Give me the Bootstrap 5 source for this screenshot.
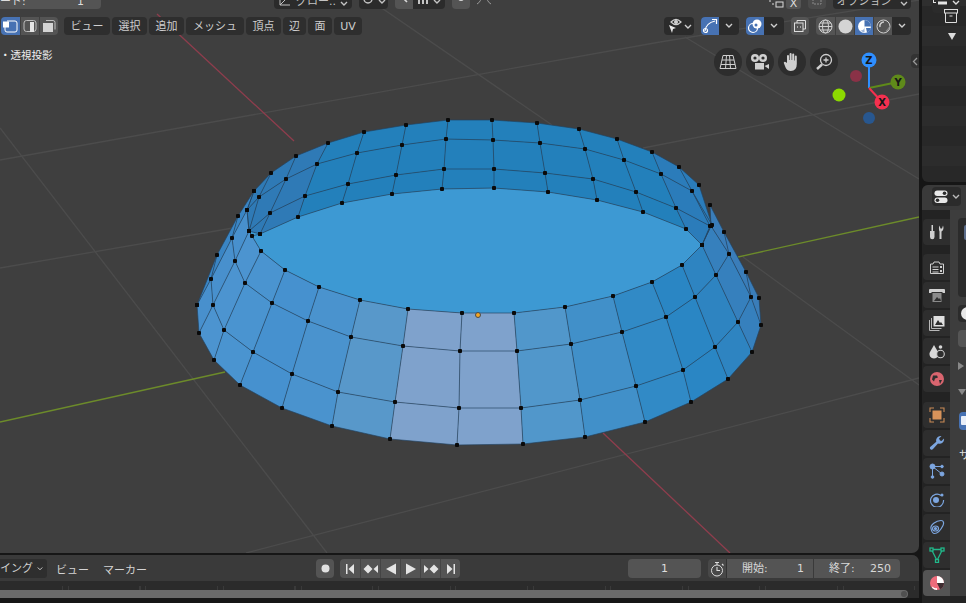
<!DOCTYPE html>
<html lang="ja">
<head>
  <meta charset="UTF-8">
  <title>Blender 編集モード</title>
  <link href="https://cdn.jsdelivr.net/npm/bootstrap@5.3.3/dist/css/bootstrap.min.css" rel="stylesheet">
  <script src="https://cdn.jsdelivr.net/npm/bootstrap@5.3.3/dist/js/bootstrap.bundle.min.js"></script>
  <style>
    html, body { height: 603px; overflow: hidden; }
    body {
      background: #161616;
      color: #d0d0d0;
      font-family: "DejaVu Sans", "Noto Sans CJK JP", sans-serif;
      font-size: 11px;
      line-height: 1;
    }
    svg { display: block; }

    /* エリア */
    .left-col { width: 919px; height: 603px; }
    .right-col { width: 44px; margin-left: 3px; height: 603px; }
    .view3d { height: 553px; background: #3f3f3f; border-radius: 0 0 7px 0; overflow: hidden; }
    .scene { position: absolute; left: 0; top: 0; }
    .timeline { margin-top: 2px; height: 43px; border-radius: 0 7px 0 0; background: #2b2b2b; overflow: hidden; }

    /* ヘッダー上段(見切れ) */
    .top-row { height: 9px; }
    .top-row > * { height: 20px; margin-top: -11px; flex: none; }
    .mode-field { width: 101px; background: #545454; border-radius: 0 0 4px 0; padding: 0 17px 2px 0; color: #ddd; }
    .dark-btn { background: #2b2b2b; border-radius: 4px; color: #c4c4c4; }
    .grey-btn { background: #545454; color: #d8d8d8; }
    .dim-btn { background: #4b4b4b; color: #8c8c8c; border-radius: 4px; }
    .orient { width: 78px; margin-left: 173px; padding-bottom: 2px; }
    .pivot { width: 29px; margin-left: 7px; }
    .snap { width: 50px; margin-left: 7px; }
    .snap-a { width: 18px; height: 100%; border-radius: 4px 0 0 4px; }
    .snap-b { width: 32px; height: 100%; border-radius: 0 4px 4px 0; }
    .prop { width: 18px; margin-left: 7px; border-radius: 4px; }
    .falloff { width: 22px; margin-left: 3px; color: #9a9a9a; }
    .xform { width: 16px; margin-left: 273px; color: #ddd; }
    .axis-x { width: 15px; margin-left: 2px; border-radius: 0 0 3px 3px; color: #ddd; padding-top: 9px; }
    .mirror { width: 18px; margin-left: 7px; }
    .options { width: 78px; margin-left: 7px; padding-bottom: 2px; }

    /* ヘッダー下段 */
    .tool-row { height: 18px; margin-top: 8px; padding-left: 1px; }
    .seg { width: 19px; height: 18px; margin-right: 0; background: #545454; color: #d6d6d6; }
    .seg + .seg { border-left: 1px solid #3f3f3f; }
    .seg:first-child { border-radius: 4px 0 0 4px; }
    .seg:last-child { border-radius: 0 4px 4px 0; }
    .seg-on { background: #4772b3; color: #fff; }
    .menus { margin-left: 6px; gap: 2px; }
    .menu-btn { height: 18px; background: #2e2e2e; border-radius: 4px; color: #cfcfcf; }
    .w46 { width: 46px; } .w35 { width: 35px; } .w58 { width: 58px; }
    .w23 { width: 23px; } .w24 { width: 24px; } .w28 { width: 28px; }
    .right-tools { margin-left: auto; margin-right: 8px; gap: 7px; }
    .tool-pair { height: 18px; border-radius: 4px; background: #2b2b2b; overflow: hidden; color: #cfcfcf; }
    .pair-on { width: 18px; height: 18px; background: #4772b3; color: #fff; }
    .pair-rest { width: 20px; height: 18px; }
    .eye-btn { width: 30px; height: 18px; }
    .xray { width: 18px; height: 18px; background: #545454; border-radius: 4px; color: #ddd; }
    .shade-rest { width: 19px; height: 18px; background: #2b2b2b; border-radius: 0 4px 4px 0; color: #cfcfcf; }
    .view-label { margin-top: 15px; font-size: 10.5px; color: #f0f0f0; }
    .nav-round { position: absolute; left: 714px; top: 48px; gap: 2px; }
    .round-btn { width: 28px; height: 28px; margin-right: 2px; border-radius: 50%; background: #2d2d2d; color: #cfcfcf; }
    .side-tab { position: absolute; right: 0; top: 54px; width: 8px; height: 14px; background: #333; border-radius: 4px 0 0 4px; color: #999; }

    /* タイムライン */
    .tl-head { height: 26px; background: #3a3a3a; padding-top: 4px; }
    .tl-mode { width: 47px; height: 19px; background: #2e2e2e; border-radius: 0 3px 3px 0; padding-right: 4px; margin-right: 9px; overflow: hidden; }
    .tl-menu { color: #d4d4d4; }
    .tl-marker { margin-left: 14px; }
    .rec { width: 18px; height: 19px; margin-left: 169px; background: #545454; border-radius: 4px; color: #e0e0e0; }
    .playback { margin-left: 6px; }
    .play-btn { width: 20px; height: 19px; background: #545454; color: #e4e4e4; }
    .play-btn + .play-btn { border-left: 1px solid #444; }
    .play-btn:first-child { border-radius: 4px 0 0 4px; }
    .play-btn:last-child { border-radius: 0 4px 4px 0; }
    .frame-now { width: 73px; height: 19px; margin-left: 168px; background: #545454; border-radius: 4px; color: #ddd; }
    .timer { width: 19px; height: 19px; margin-left: 7px; background: #484848; border-radius: 4px 0 0 4px; color: #ddd; border-right: 1px solid #333; }
    .range { height: 19px; background: #545454; color: #d8d8d8; padding: 0 9px 0 15px; }
    .range-a { width: 87px; border-right: 1px solid #3a3a3a; }
    .range-b { width: 86px; border-radius: 0 4px 4px 0; }
    .tl-ticks {
      height: 9px;
      background: repeating-linear-gradient(90deg, transparent 0 62px, #3a3a3a 62px 63px, transparent 63px 68px, #3a3a3a 68px 69px, transparent 69px 77.5px) bottom / 100% 4px no-repeat;
    }
    .tl-scroll { width: 908px; height: 8px; background: #6a6a6a; border-radius: 0 4px 4px 0; padding-right: 1px; }
    .tl-knob { width: 6px; height: 6px; border-radius: 50%; background: #505050; }

    /* アウトライナー */
    .outliner { height: 182px; background: #282828; border-radius: 0 0 0 6px; overflow: hidden; }
    .ol-head { height: 13px; background: #2f2f2f; }
    .ol-drop { width: 28px; height: 20px; margin: -7px 0 0 10px; background: #2b2b2b; border-radius: 4px; color: #ddd; }
    .ol-row { height: 20px; padding-left: 22px; color: #ddd; }
    .ol-row:nth-child(odd) { background: #2c2c2c; }

    /* プロパティ */
    .props { height: 418px; margin-top: 3px; background: #232323; border-radius: 6px 0 0 0; overflow: hidden; }
    .pr-head { height: 25px; background: #3a3a3a; padding-top: 2px; }
    .pr-drop { width: 29px; height: 19px; margin-left: 10px; background: #2b2b2b; border-radius: 4px; color: #ddd; }
    .pr-tabs { width: 28px; padding: 9px 0 0 1px; gap: 2px; }
    .pr-tab { height: 26px; flex: none; background: #2e2e2e; border-radius: 4px 0 0 4px; color: #d0d0d0; }
    .pr-tab-on { background: #545454; }
    .tab-gap-a { margin-top: 7px; }
    .tab-gap-b { margin-top: 8px; }
    .pr-body { width: 16px; background: #3d3d3d; padding: 8px 0 0 8px; overflow: hidden; }
    .pr-list { height: 79px; background: #2b2b2b; border-radius: 4px 0 0 4px; padding: 7px 0 0 6px; }
    .pr-list-bar { width: 3px; height: 15px; background: #5b6c8a; border-radius: 2px 0 0 2px; }
    .pr-icon { height: 17px; margin-top: 8px; background: #2b2b2b; border-radius: 4px 0 0 4px; padding: 2px 0 0 3px; }
    .pr-dot { width: 13px; height: 13px; border-radius: 50%; background: #e8e8e8; }
    .pr-field { height: 17px; margin-top: 8px; background: #555; border-radius: 4px 0 0 4px; }
    .tri-r { margin-top: 15px; width: 0; height: 0; border-left: 6px solid #888; border-top: 4px solid transparent; border-bottom: 4px solid transparent; }
    .tri-d { margin-top: 19px; width: 0; height: 0; border-top: 6px solid #888; border-left: 4px solid transparent; border-right: 4px solid transparent; }
    .pr-blue { width: 14px; height: 18px; margin: 17px 0 0 1px; background: #4772b3; border-radius: 4px 0 0 4px; padding: 4px 0 0 2px; }
    .pr-blue-in { width: 12px; height: 9px; background: #e8eef8; border-radius: 1px; }
    .pr-sa { margin-top: 20px; margin-left: 1px; white-space: nowrap; color: #ddd; }
  </style>
</head>
<body>
<div class="d-flex">

  <div class="left-col d-flex flex-column">
    <!-- 3Dビューポート -->
    <div class="view3d position-relative">
      <svg id="scene" class="scene" width="919" height="553"></svg>

      <div class="top-row d-flex position-relative">
        <div class="mode-field d-flex align-items-end justify-content-between"><span>ード:</span><span>1</span></div>
        <div class="dark-btn orient d-flex align-items-end justify-content-center gap-1">
          <svg width="14" height="12" viewBox="0 0 14 12" fill="none" stroke="currentColor"><path d="M2 1v9h10M2 10l7-7"/></svg>
          <span>グロー..</span>
          <svg width="8" height="6" viewBox="0 0 8 6" fill="none" stroke="currentColor" stroke-width="1.4"><path d="M1 1l3 3 3-3"/></svg>
        </div>
        <div class="dark-btn pivot d-flex align-items-end justify-content-center gap-1 pb-1">
          <svg width="12" height="10" viewBox="0 0 12 10" fill="none" stroke="currentColor" stroke-width="1.3"><circle cx="6" cy="4" r="4"/></svg>
          <svg width="8" height="6" viewBox="0 0 8 6" fill="none" stroke="currentColor" stroke-width="1.4"><path d="M1 1l3 3 3-3"/></svg>
        </div>
        <div class="snap d-flex">
          <div class="grey-btn snap-a d-flex align-items-end justify-content-center pb-1">
            <svg width="12" height="10" viewBox="0 0 12 10" fill="none" stroke="currentColor" stroke-width="1.6"><path d="M2 0l7 7"/></svg>
          </div>
          <div class="dark-btn snap-b d-flex align-items-end justify-content-center gap-1 pb-1">
            <svg width="12" height="10" viewBox="0 0 12 10" fill="currentColor"><path d="M1 3h2v6H1zM5 3h2v6H5zM9 0h2v9H9z"/></svg>
            <svg width="8" height="6" viewBox="0 0 8 6" fill="none" stroke="currentColor" stroke-width="1.4"><path d="M1 1l3 3 3-3"/></svg>
          </div>
        </div>
        <div class="grey-btn prop d-flex align-items-end justify-content-center pb-1">
          <svg width="10" height="10" viewBox="0 0 10 10" fill="currentColor"><circle cx="5" cy="3" r="3"/></svg>
        </div>
        <div class="falloff d-flex align-items-end justify-content-center pb-1">
          <svg width="16" height="10" viewBox="0 0 16 10" fill="none" stroke="currentColor"><path d="M6 0Q5 7 1 9M10 0q1 7 5 9"/></svg>
        </div>
        <div class="xform d-flex align-items-end">
          <svg width="16" height="10" viewBox="0 0 16 10" fill="none" stroke="currentColor"><path d="M1 2h2M4 5h2"/><rect x="8" y="3" width="7" height="5"/></svg>
        </div>
        <div class="grey-btn axis-x d-flex align-items-end justify-content-center">X</div>
        <div class="dim-btn mirror d-flex align-items-end justify-content-center pb-1">
          <svg width="10" height="9" viewBox="0 0 10 9" fill="none" stroke="currentColor" stroke-dasharray="2 1"><rect x="1" y="0" width="8" height="8"/></svg>
        </div>
        <div class="dark-btn options d-flex align-items-end justify-content-center gap-2">
          <span>オプション</span>
          <svg width="8" height="6" viewBox="0 0 8 6" fill="none" stroke="currentColor" stroke-width="1.4"><path d="M1 1l3 3 3-3"/></svg>
        </div>
      </div>

      <div class="tool-row d-flex position-relative">
        <div class="d-flex">
          <div class="seg seg-on d-flex align-items-center justify-content-center">
            <svg width="16" height="14" viewBox="0 0 16 14" fill="none" stroke="currentColor"><path d="M4 2h8a2 2 0 0 1 2 2v7a2 2 0 0 1-2 2H4a2 2 0 0 1-2-2V8"/><rect x="0.5" y="3" width="5" height="5" fill="currentColor"/></svg>
          </div>
          <div class="seg d-flex align-items-center justify-content-center">
            <svg width="14" height="14" viewBox="0 0 14 14" fill="none" stroke="#bdbdbd"><rect x="1" y="1.500" width="12" height="11" rx="2.500"/><rect x="7" y="3" width="4" height="10" fill="#e4e4e4" stroke="none"/></svg>
          </div>
          <div class="seg d-flex align-items-center justify-content-center">
            <svg width="14" height="14" viewBox="0 0 14 14" fill="none" stroke="#bdbdbd"><path d="M4 1.500h7a2 2 0 0 1 2 2v7"/><rect x="1" y="4" width="10" height="9" fill="#d4d4d4" stroke="none"/></svg>
          </div>
        </div>
        <div class="menus d-flex">
          <div class="menu-btn w46 d-flex align-items-center justify-content-center">ビュー</div>
          <div class="menu-btn w35 d-flex align-items-center justify-content-center">選択</div>
          <div class="menu-btn w35 d-flex align-items-center justify-content-center">追加</div>
          <div class="menu-btn w58 d-flex align-items-center justify-content-center">メッシュ</div>
          <div class="menu-btn w35 d-flex align-items-center justify-content-center">頂点</div>
          <div class="menu-btn w23 d-flex align-items-center justify-content-center">辺</div>
          <div class="menu-btn w24 d-flex align-items-center justify-content-center">面</div>
          <div class="menu-btn w28 d-flex align-items-center justify-content-center">UV</div>
        </div>

        <div class="right-tools d-flex">
          <div class="tool-pair eye-btn d-flex align-items-center justify-content-center">
            <svg width="28" height="16" viewBox="0 0 28 16" fill="none" stroke="currentColor">
              <path d="M6 4q5-5 10 0q-5 5-10 0z" stroke-width="1.200"/><circle cx="11" cy="4" r="1.500" fill="currentColor"/>
              <path d="M4 7l7 3-3 1-1 4z" fill="#e8e8e8" stroke="none"/>
              <path d="M20 7l3 3 3-3" stroke-width="1.400"/>
            </svg>
          </div>
          <div class="tool-pair d-flex">
            <div class="pair-on d-flex align-items-center justify-content-center">
              <svg width="16" height="16" viewBox="0 0 16 16" fill="none" stroke="currentColor" stroke-width="1.200"><path d="M3 13q1-8 10-10"/><circle cx="3.500" cy="12.500" r="2"/><path d="M10 1.500h4.500V6"/></svg>
            </div>
            <div class="pair-rest d-flex align-items-center justify-content-center">
              <svg width="8" height="6" viewBox="0 0 8 6" fill="none" stroke="currentColor" stroke-width="1.400"><path d="M1 1l3 3 3-3"/></svg>
            </div>
          </div>
          <div class="tool-pair d-flex">
            <div class="pair-on d-flex align-items-center justify-content-center">
              <svg width="16" height="16" viewBox="0 0 16 16"><circle cx="6" cy="10" r="4.500" fill="none" stroke="#fff" stroke-width="1.200"/><circle cx="10" cy="6" r="4.500" fill="#fff"/><circle cx="9" cy="7" r="1.500" fill="#4772b3"/></svg>
            </div>
            <div class="pair-rest d-flex align-items-center justify-content-center">
              <svg width="8" height="6" viewBox="0 0 8 6" fill="none" stroke="currentColor" stroke-width="1.400"><path d="M1 1l3 3 3-3"/></svg>
            </div>
          </div>
          <div class="xray d-flex align-items-center justify-content-center">
            <svg width="14" height="14" viewBox="0 0 14 14" fill="none" stroke="currentColor"><path d="M4 4V1.500h8.500V10H10"/><rect x="1.500" y="4" width="8.500" height="8.500"/><path d="M4 8h.8M7 8h.8" stroke-width="1.400"/></svg>
          </div>
          <div class="d-flex">
            <div class="seg d-flex align-items-center justify-content-center">
              <svg width="15" height="15" viewBox="0 0 15 15" fill="none" stroke="#d0d0d0"><circle cx="7.500" cy="7.500" r="6.500"/><ellipse cx="7.500" cy="7.500" rx="3" ry="6.500"/><path d="M1 7.500h13M2 4h11M2 11h11"/></svg>
            </div>
            <div class="seg d-flex align-items-center justify-content-center">
              <svg width="15" height="15" viewBox="0 0 15 15"><circle cx="7.500" cy="7.500" r="7" fill="#d4d4d4"/></svg>
            </div>
            <div class="seg seg-on d-flex align-items-center justify-content-center">
              <svg width="15" height="15" viewBox="0 0 15 15"><circle cx="7.500" cy="7.500" r="6.500" fill="#fff"/><path d="M7.500 1a6.500 6.500 0 0 1 6.500 6.500H7.500z" fill="#4772b3"/><path d="M7.500 7.500a4 4 0 0 1-4 4 6.500 6.500 0 0 0 4 2z" fill="#9fb6d8"/><path d="M9 9h5a6.500 6.500 0 0 1-4 4.500z" fill="#4772b3"/></svg>
            </div>
            <div class="seg d-flex align-items-center justify-content-center">
              <svg width="15" height="15" viewBox="0 0 15 15" fill="none" stroke="#cfcfcf"><circle cx="7.500" cy="7.500" r="6.500"/><path d="M4 8a4 4 0 0 1 4-5" stroke-width="1.500"/><path d="M10 12.500a6 6 0 0 0 3-4" stroke="#888" stroke-width="1.500"/></svg>
            </div>
            <div class="shade-rest d-flex align-items-center justify-content-center">
              <svg width="8" height="6" viewBox="0 0 8 6" fill="none" stroke="currentColor" stroke-width="1.400"><path d="M1 1l3 3 3-3"/></svg>
            </div>
          </div>
        </div>
      </div>

      <div class="view-label position-relative">・透視投影</div>

      <div class="nav-round d-flex">
        <div class="round-btn d-flex align-items-center justify-content-center">
          <svg width="18" height="16" viewBox="0 0 18 16" fill="none" stroke="currentColor"><path d="M4 1.500h10l3 13H1zM3 6h12M2 10.500h14M7.500 1.500L6.500 14.500M10.500 1.500l1 13"/></svg>
        </div>
        <div class="round-btn d-flex align-items-center justify-content-center">
          <svg width="20" height="18" viewBox="0 0 20 18" fill="currentColor"><circle cx="5" cy="5" r="4"/><circle cx="13" cy="5" r="4"/><circle cx="5" cy="5" r="1.600" fill="#2d2d2d"/><circle cx="13" cy="5" r="1.600" fill="#2d2d2d"/><rect x="5" y="10" width="9" height="6.500"/><path d="M14.500 13l4.500-2v5z"/></svg>
        </div>
        <div class="round-btn d-flex align-items-center justify-content-center">
          <svg width="18" height="20" viewBox="0 0 18 20" fill="currentColor"><path d="M4 11V4a1 1 0 0 1 2 0v4h.6V2a1 1 0 0 1 2 0v6h.6V2.500a1 1 0 0 1 2 0V8.500h.6V4.500a1 1 0 0 1 2 0V12q0 7-6 7q-3.500 0-5-3L1 11.500c-.8-1.500 1-2.500 2-1.200z"/></svg>
        </div>
        <div class="round-btn d-flex align-items-center justify-content-center">
          <svg width="18" height="18" viewBox="0 0 18 18" fill="none" stroke="currentColor" stroke-width="1.300"><circle cx="11" cy="7" r="5.500"/><path d="M7 11.500L2 16" stroke-width="2.400"/><path d="M8.500 7h5M11 4.500v5"/></svg>
        </div>
      </div>

      <div class="side-tab d-flex align-items-center justify-content-center">
        <svg width="6" height="9" viewBox="0 0 6 9" fill="none" stroke="currentColor" stroke-width="1.300"><path d="M5 1L1.500 4.500 5 8"/></svg>
      </div>
    </div>

    <!-- タイムライン -->
    <div class="timeline">
      <div class="tl-head d-flex">
        <div class="tl-mode d-flex align-items-center justify-content-end gap-1">
          <span class="text-nowrap">イング</span>
          <svg class="flex-none" width="8" height="6" viewBox="0 0 8 6" fill="none" stroke="currentColor" stroke-width="1.300"><path d="M1 1l3 3 3-3"/></svg>
        </div>
        <div class="tl-menu d-flex align-items-center">ビュー</div>
        <div class="tl-menu tl-marker d-flex align-items-center">マーカー</div>
        <div class="rec d-flex align-items-center justify-content-center">
          <svg width="9" height="9" viewBox="0 0 9 9"><circle cx="4.500" cy="4.500" r="4" fill="currentColor"/></svg>
        </div>
        <div class="playback d-flex">
          <div class="play-btn d-flex align-items-center justify-content-center">
            <svg width="12" height="12" viewBox="0 0 12 12" fill="currentColor"><path d="M2 1h1.500v10H2zM10 1v10L4.500 6z"/></svg>
          </div>
          <div class="play-btn d-flex align-items-center justify-content-center">
            <svg width="16" height="12" viewBox="0 0 16 12" fill="currentColor"><path d="M5 1.500L9.500 6 5 10.500.5 6zM15 2v8l-4.500-4z"/></svg>
          </div>
          <div class="play-btn d-flex align-items-center justify-content-center">
            <svg width="12" height="12" viewBox="0 0 12 12" fill="currentColor"><path d="M11 .5v11L1 6z"/></svg>
          </div>
          <div class="play-btn d-flex align-items-center justify-content-center">
            <svg width="12" height="12" viewBox="0 0 12 12" fill="currentColor"><path d="M1 .5v11L11 6z"/></svg>
          </div>
          <div class="play-btn d-flex align-items-center justify-content-center">
            <svg width="16" height="12" viewBox="0 0 16 12" fill="currentColor"><path d="M11 1.500L15.500 6 11 10.500 6.500 6zM1 2v8l4.500-4z"/></svg>
          </div>
          <div class="play-btn d-flex align-items-center justify-content-center">
            <svg width="12" height="12" viewBox="0 0 12 12" fill="currentColor"><path d="M10 1H8.500v10H10zM2 1v10l5.500-5z"/></svg>
          </div>
        </div>
        <div class="frame-now d-flex align-items-center justify-content-center">1</div>
        <div class="timer d-flex align-items-center justify-content-center">
          <svg width="15" height="16" viewBox="0 0 15 16" fill="none" stroke="currentColor"><circle cx="7" cy="9.500" r="5.500"/><path d="M7 6v3.500h3M5 1.500h4M7 1.500V4M12 3l1.500 1.500" stroke-width="1.100"/></svg>
        </div>
        <div class="range range-a d-flex align-items-center justify-content-between"><span>開始:</span><span>1</span></div>
        <div class="range range-b d-flex align-items-center justify-content-between"><span>終了:</span><span>250</span></div>
      </div>
      <div class="tl-ticks"></div>
      <div class="tl-scroll d-flex align-items-center justify-content-end"><div class="tl-knob"></div></div>
    </div>
  </div>

  <div class="right-col d-flex flex-column">
    <!-- アウトライナー -->
    <div class="outliner">
      <div class="ol-head">
        <div class="ol-drop d-flex align-items-center justify-content-center gap-1">
          <svg width="16" height="13" viewBox="0 0 16 13" fill="#e4e4e4"><path d="M1 1h3v1H2v3h2v1H1z"/><rect x="6" y="0" width="9" height="3"/><rect x="6" y="4.500" width="9" height="3"/></svg>
          <svg width="8" height="6" viewBox="0 0 8 6" fill="none" stroke="currentColor" stroke-width="1.400"><path d="M1 1l3 3 3-3"/></svg>
        </div>
      </div>
      <div class="ol-row d-flex align-items-center">
        <svg width="14" height="14" viewBox="0 0 14 14" fill="none" stroke="currentColor"><rect x="0.500" y="0.500" width="13" height="3.500"/><path d="M1.500 4v9.500h11V4M5.500 7h3" /></svg>
      </div>
      <div class="ol-row d-flex align-items-center">
        <svg class="ms-1" width="8" height="7" viewBox="0 0 8 7" fill="currentColor"><path d="M0 0h8L4 7z"/></svg>
      </div>
      <div class="ol-row"></div><div class="ol-row"></div><div class="ol-row"></div>
      <div class="ol-row"></div><div class="ol-row"></div><div class="ol-row"></div>
    </div>

    <!-- プロパティ -->
    <div class="props">
      <div class="pr-head">
        <div class="pr-drop d-flex align-items-center justify-content-center gap-1">
          <svg width="14" height="14" viewBox="0 0 14 14"><rect x="0.500" y="0.500" width="13" height="5.500" rx="2.700" fill="#e8e8e8"/><circle cx="10.500" cy="3.200" r="1.800" fill="#2b2b2b"/><rect x="0.500" y="7.500" width="13" height="5.500" rx="2.700" fill="#e8e8e8"/><circle cx="3.500" cy="10.200" r="1.800" fill="#2b2b2b"/></svg>
          <svg width="8" height="6" viewBox="0 0 8 6" fill="none" stroke="#bbb" stroke-width="1.400"><path d="M1 1l3 3 3-3"/></svg>
        </div>
      </div>
      <div class="d-flex">
        <div class="pr-tabs d-flex flex-column">
          <div class="pr-tab d-flex align-items-center justify-content-center">
            <svg width="16" height="16" viewBox="0 0 16 16" fill="currentColor"><rect x="2.500" y="1" width="1.500" height="6"/><path d="M1 7h4.500v6a2.200 2.200 0 0 1-4.500 0z"/><path d="M11 7.500V15h2V7.500c2-1 2.500-4 1.500-6L13.500 4.500h-1.500L11 1.500c-1 2-.5 5 0 6z" transform="translate(-.5)"/></svg>
          </div>
          <div class="pr-tab tab-gap-a d-flex align-items-center justify-content-center">
            <svg width="16" height="15" viewBox="0 0 16 15" fill="none" stroke="currentColor"><path d="M1.500 4h2.500l1-2h5l1 2h3.500v9.500h-13z"/><path d="M3.500 7h6M3.500 9.500h6M3.500 12h6" /><rect x="11" y="6" width="2" height="2" fill="currentColor" stroke="none"/><rect x="11" y="10" width="2" height="2" fill="currentColor" stroke="none"/></svg>
          </div>
          <div class="pr-tab d-flex align-items-center justify-content-center">
            <svg width="16" height="15" viewBox="0 0 16 15" fill="currentColor"><path d="M1 1h14a1 1 0 0 1 1 1v3h-2.500v-1h-11v1H0V2a1 1 0 0 1 1-1z"/><rect x="3.500" y="5" width="9" height="9" fill="#8a8a8a"/><path d="M5 13l3-4 2 2 1-1 1 3z" fill="#2e2e2e"/></svg>
          </div>
          <div class="pr-tab d-flex align-items-center justify-content-center">
            <svg width="16" height="16" viewBox="0 0 16 16" fill="none" stroke="#b8b8b8"><path d="M.5 5v10.500h10M2.500 3v10.500h10"/><rect x="4.500" y="1" width="11" height="10.500" fill="#e0e0e0" stroke="none"/><path d="M6 10l3-5 2 3 1-1 2 3z" fill="#2e2e2e" stroke="none"/></svg>
          </div>
          <div class="pr-tab d-flex align-items-center justify-content-center">
            <svg width="16" height="16" viewBox="0 0 16 16"><path d="M5 2l4 7a4.500 4.500 0 1 1-8 0z" fill="#d8d8d8"/><circle cx="11.500" cy="11" r="3.800" fill="#2e2e2e" stroke="#d0d0d0" stroke-width="1.100"/><circle cx="11.500" cy="4" r="1.800" fill="#d8d8d8"/></svg>
          </div>
          <div class="pr-tab d-flex align-items-center justify-content-center">
            <svg width="16" height="16" viewBox="0 0 16 16" fill="#d9656f"><circle cx="8" cy="8" r="7"/><path d="M4 4.500h4l1 2-3 1-1 3-2-2zM10 9l3 0-2 4z" fill="#2e2e2e"/></svg>
          </div>
          <div class="pr-tab tab-gap-b d-flex align-items-center justify-content-center">
            <svg width="16" height="16" viewBox="0 0 16 16" fill="none" stroke="#c98a55" stroke-width="1.100"><rect x="3.500" y="3.500" width="9" height="9" fill="#d8935a" stroke="none"/><path d="M1 5V1h4M11 1h4v4M15 11v4h-4M5 15H1v-4"/></svg>
          </div>
          <div class="pr-tab d-flex align-items-center justify-content-center">
            <svg width="16" height="16" viewBox="0 0 16 16" fill="#7ca6e0"><path d="M15 3.500a4.500 4.500 0 0 1-6 5l-5.200 5.800a1.800 1.800 0 0 1-2.600-2.400L7.300 6.700A4.500 4.500 0 0 1 12.500 1L10 3.500l1 2 1.500.5z"/></svg>
          </div>
          <div class="pr-tab d-flex align-items-center justify-content-center">
            <svg width="16" height="16" viewBox="0 0 16 16" fill="#7ca6e0" stroke="#7ca6e0"><circle cx="3.500" cy="3.500" r="2.500"/><circle cx="13" cy="3.500" r="1.300"/><circle cx="13" cy="11" r="2"/><circle cx="3.500" cy="14" r="1.300"/><path d="M3.500 3.500H13M3.500 3.500L13 11M3.500 3.500V14" fill="none"/></svg>
          </div>
          <div class="pr-tab d-flex align-items-center justify-content-center">
            <svg width="16" height="16" viewBox="0 0 16 16" fill="none" stroke="#7ca6e0" stroke-width="1.200"><path d="M12 4.500A6.500 6.500 0 1 0 14.500 9"/><circle cx="7" cy="9" r="3" fill="#7ca6e0" stroke="none"/><circle cx="13" cy="4" r="1.500" fill="#7ca6e0" stroke="none"/></svg>
          </div>
          <div class="pr-tab d-flex align-items-center justify-content-center">
            <svg width="16" height="16" viewBox="0 0 16 16" fill="none" stroke="#7ca6e0" stroke-width="1.200"><path d="M2 9.500C1 6 7 1.500 12 1.500c3 0 3 3 2 5-2 4-5 8-8.500 8C3.500 14.500 2.500 12 2 9.500z"/><ellipse cx="6.500" cy="9.500" rx="3" ry="2.500"/><circle cx="6.500" cy="9.500" r="1" fill="#7ca6e0"/></svg>
          </div>
          <div class="pr-tab d-flex align-items-center justify-content-center">
            <svg width="16" height="16" viewBox="0 0 16 16" fill="#2e2e2e" stroke="#21b88a" stroke-width="1.300"><path d="M2.500 2.500h11L8 13.500z"/><rect x="1" y="1" width="3" height="3"/><rect x="12" y="1" width="3" height="3"/><rect x="6.500" y="12.500" width="3" height="3"/></svg>
          </div>
          <div class="pr-tab pr-tab-on d-flex align-items-center justify-content-center">
            <svg width="16" height="16" viewBox="0 0 16 16"><circle cx="8" cy="8" r="7" fill="#ee6b7b"/><path d="M8 1a7 7 0 0 1 7 7H8z" fill="#fff"/><path d="M8 8h7a7 7 0 0 1-4 6.300z" fill="#3d2c30"/><path d="M3.500 11.500a4 4 0 0 0 4.500 1.500V15a7 7 0 0 1-5-2.200z" fill="#fff"/></svg>
          </div>
        </div>
        <div class="pr-body flex-grow-1">
          <div class="pr-list"><div class="pr-list-bar"></div></div>
          <div class="pr-icon"><div class="pr-dot"></div></div>
          <div class="pr-field"></div>
          <div class="tri-r"></div>
          <div class="tri-d"></div>
          <div class="pr-blue"><div class="pr-blue-in"></div></div>
          <div class="pr-sa">サ</div>
        </div>
      </div>
    </div>
  </div>
</div>

<script>
  // 頂点データ(列ごとに上から下へ)
  const backCols = [
    [[254,191],[247,210],[249,231],[252,236]],
    [[271,173],[259,197],[249,231],[260,234]],
    [[296,156],[286,179],[270,213],[260,234]],
    [[328,143],[317,164],[305,196],[298,217]],
    [[364,132],[357,153],[348,184],[342,203]],
    [[406,125],[402,145],[396,175],[392,194]],
    [[448,120],[446,139],[444,169],[442,189]],
    [[492,120],[493,140],[494,169],[494,188]],
    [[537,123],[540,143],[545,173],[548,192]],
    [[579,129],[585,149],[593,179],[597,200]],
    [[617,139],[624,160],[636,192],[643,212]],
    [[652,152],[661,174],[676,208],[686,229]],
    [[679,167],[692,191],[710,226],[702,245]],
    [[699,185],[712,225],[711,226],[702,245]]
  ];
  const frontCols = [
    [[254,191],[238,216],[217,255],[197,305]],
    [[247,210],[232,238],[211,279],[197,305]],
    [[249,231],[235,261],[213,305],[199,333]],
    [[261,251],[245,283],[224,330],[214,360]],
    [[285,270],[272,303],[253,352],[240,385]],
    [[319,287],[308,321],[292,374],[282,408]],
    [[360,300],[351,337],[338,392],[332,426]],
    [[408,309],[403,346],[395,402],[390,439]],
    [[462,313],[460,351],[459,408],[457,445]],
    [[514,313],[517,351],[521,408],[523,444]],
    [[565,307],[571,344],[580,400],[585,437]],
    [[613,296],[622,332],[636,386],[645,422]],
    [[652,282],[666,317],[683,370],[691,402]],
    [[682,265],[695,297],[715,347],[728,379]],
    [[702,245],[716,275],[738,322],[752,352]],
    [[711,226],[729,254],[751,297],[761,325]],
    [[710,205],[724,232],[746,272],[759,298]]
  ];
  const frontColors = ['#3a85c4','#4890cd','#4c94d0','#4a94d0','#4691cf','#4a93ce','#5898ca','#7fa2cc','#7fa2cc',
                       '#5197cb','#4190c9','#318ac6','#2a86c4','#2e84c1','#3680bd','#3a7db9'];
  const gridLines = [
    [0,160,660,42,'g'], [660,42,919,0,'g'], [370,0,552,125,'g'], [643,148,919,94,'g'],
    [0,268,233,228,'g'], [0,128,327,553,'g'], [246,553,919,378,'g'], [743,257,919,385,'g'],
    [685,37,919,179,'g'], [157,14,294,141,'r'], [603,433,730,553,'r'],
    [0,422,225,372,'y'], [738,257,919,217,'y']
  ];
  const lineColor = { g: '#4c4c4c', r: '#8f3d4d', y: '#6c8b2a' };

  let svg = '';
  function poly(pts, fill) {
    return '<polygon points="' + pts.map(p => p.join(',')).join(' ') + '" fill="' + fill + '"/>';
  }
  function seg(a, b, color) {
    return '<line x1="' + a[0] + '" y1="' + a[1] + '" x2="' + b[0] + '" y2="' + b[1] + '" stroke="' + color + '"/>';
  }

  gridLines.forEach(l => {
    svg += '<line x1="' + l[0] + '" y1="' + l[1] + '" x2="' + l[2] + '" y2="' + l[3] + '" stroke="' + lineColor[l[4]] + '" stroke-width="1.300"/>';
  });

  // 奥の壁
  for (let c = 0; c < backCols.length - 1; c++) {
    for (let r = 0; r < 3; r++) {
      let fill = (c < 3) ? '#2f7ab6' : (c > 10) ? '#2b7cba' : '#2380bb';
      svg += poly([backCols[c][r], backCols[c+1][r], backCols[c+1][r+1], backCols[c][r+1]], fill);
    }
  }
  // 底面
  let disc = [[249,231]].concat(backCols.slice(1, 13).map(c => c[3])).concat(frontCols.slice(3, 15).reverse().map(c => c[0]));
  svg += poly(disc, '#3d99d3');
  // 手前の面
  for (let c = 0; c < frontCols.length - 1; c++) {
    for (let r = 0; r < 3; r++) {
      svg += poly([frontCols[c][r], frontCols[c+1][r], frontCols[c+1][r+1], frontCols[c][r+1]], frontColors[c]);
    }
  }
  // 辺
  const edge = 'rgba(34,66,96,.65)';
  [backCols, frontCols].forEach(cols => {
    cols.forEach((col, c) => {
      col.forEach((p, r) => {
        if (r < 3) svg += seg(p, col[r+1], edge);
        if (c < cols.length - 1) svg += seg(p, cols[c+1][r], edge);
      });
    });
  });
  // 頂点
  [backCols, frontCols].forEach(cols => {
    cols.forEach(col => col.forEach(p => {
      svg += '<rect x="' + (p[0]-2) + '" y="' + (p[1]-2) + '" width="4" height="4" rx="1" fill="#0a0a0a"/>';
    }));
  });
  svg += '<circle cx="478" cy="315" r="2.500" fill="#f5a623" stroke="#4a4a4a"/>';

  // 軸ギズモ
  svg += '<circle cx="856" cy="76" r="6" fill="#8a3247"/><circle cx="839" cy="95" r="6.500" fill="#8cd900"/><circle cx="869" cy="118" r="6" fill="#28578f"/>';
  svg += '<line x1="869" y1="88" x2="869" y2="60" stroke="#2e8fff" stroke-width="2"/>';
  svg += '<line x1="869" y1="88" x2="898" y2="82" stroke="#5f8a1a" stroke-width="2"/>';
  svg += '<line x1="869" y1="88" x2="882" y2="102" stroke="#f5304f" stroke-width="2"/>';
  svg += '<circle cx="869" cy="60" r="7.500" fill="#2e8fff"/><circle cx="898" cy="82" r="7.500" fill="#5f8a1a"/><circle cx="882" cy="102" r="7.500" fill="#f5304f"/>';
  svg += '<g font-family="DejaVu Sans" font-size="10" font-weight="bold" text-anchor="middle" fill="#161616">' +
         '<text x="869" y="64">Z</text><text x="898" y="86">Y</text><text x="882" y="106">X</text></g>';

  document.getElementById('scene').innerHTML = svg;
</script>
</body>
</html>
